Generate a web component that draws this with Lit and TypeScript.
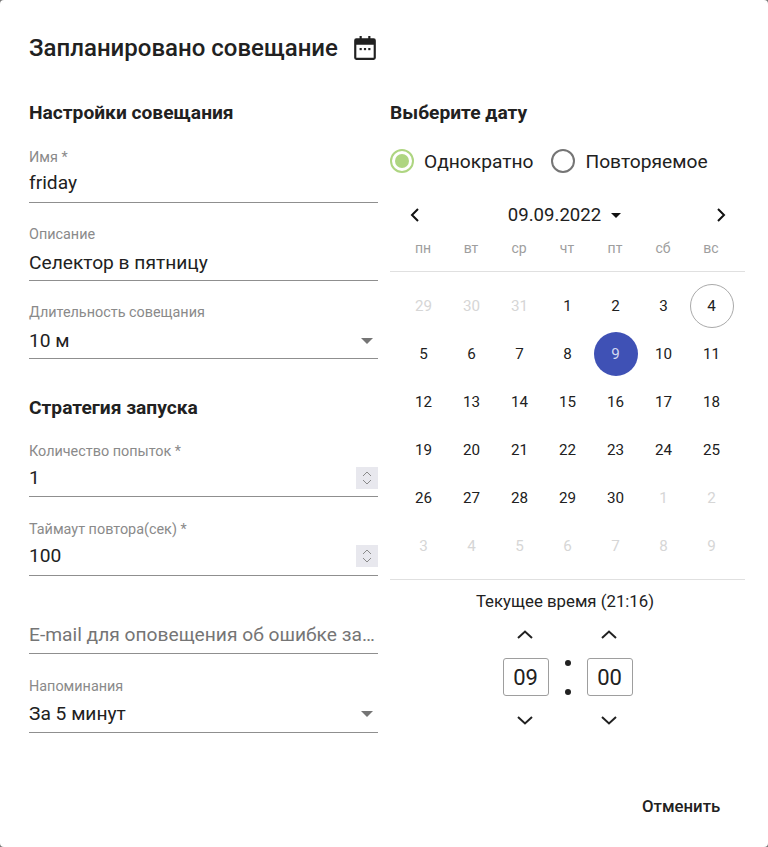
import { LitElement, html, css, svg } from "lit";
import { customElement } from "lit/decorators.js";

const chevUp = svg`<path d="M1 10 L8 3.5 L15 10" fill="none" stroke="#212121" stroke-width="2"/>`;
const chevDown = svg`<path d="M1 3 L8 9.5 L15 3" fill="none" stroke="#212121" stroke-width="2"/>`;

interface Day { n: number; cls?: string }

@customElement("app-root")
export class AppRoot extends LitElement {
  static styles = css`
    :host { display: block; width: 768px; height: 847px; background: #777; font-family: Roboto, "Noto Sans", sans-serif; color: #212121; overflow: hidden; position: relative; }
    .dialog { padding: 33px 23px 0 29px; box-sizing: border-box; height: 847px; display: flex; flex-direction: column; background: #fff; border-radius: 4px; }
    .title { display: flex; align-items: center; gap: 14px; height: 30px; font-size: 24px; font-weight: 500; line-height: 30px; }
    .title svg { display: block; }
    .cols { display: flex; gap: 12px; margin-top: 38px; }
    .left { width: 349px; flex: none; }
    .right { width: 355px; flex: none; }
    h3 { margin: 0; font-size: 19.2px; font-weight: 700; line-height: 24px; height: 24px; }
    .field { position: relative; border-bottom: 1px solid #8f8f8f; box-sizing: content-box; }
    .label { font-size: 14.4px; line-height: 16px; color: #8a8a8a; height: 16px; }
    .value { font-size: 19.2px; line-height: 24px; height: 24px; color: #212121; display: flex; justify-content: space-between; align-items: center; }
    .f1 { margin-top: 24px; padding-bottom: 7px; }
    .f1 .value { margin-top: 6px; }
    .first { margin-top: 25px; }
    .first .value { margin-top: 5px; }
    .low { padding-bottom: 5px; }
    .low .value { margin-top: 8px; }
    .low1 { padding-bottom: 6px; margin-top: 25px; }
    .low1 .value { margin-top: 7px; }
    .short { padding-bottom: 6px; }
    .wide { margin-top: 25px; }
    .section { margin-top: 37px; }
    .arrow { width: 0; height: 0; border-left: 6px solid transparent; border-right: 6px solid transparent; border-top: 6px solid #757575; margin-right: 5px; }
    .spin { width: 22px; height: 22px; background: #e8e8ee; display: flex; flex-direction: column; align-items: center; justify-content: center; gap: 2px; }
    .spin svg { display: block; }
    .placeholder { font-size: 19.2px; line-height: 24px; color: #757575; white-space: nowrap; overflow: hidden; text-overflow: ellipsis; padding-bottom: 6px; }
    .email { margin-top: 47px; }
    .radios { display: flex; align-items: center; margin-top: 24px; height: 24px; font-size: 19.2px; }
    .radio { width: 24px; height: 24px; box-sizing: border-box; border-radius: 50%; border: 2px solid #757575; display: flex; align-items: center; justify-content: center; flex: none; }
    .radio.on { border-color: #aed581; }
    .radio.on::after { content: ""; width: 14px; height: 14px; background: #aed581; border-radius: 50%; }
    .rt { margin-left: 10px; }
    .rl { margin-right: 18px; }
    .cal-head { display: flex; align-items: center; justify-content: space-between; margin-top: 30px; height: 24px; padding: 0 18px 0 19px; }
    .cal-head svg { display: block; }
    .cal-title { font-size: 18.6px; color: #212121; display: flex; align-items: center; gap: 10px; line-height: 24px; padding-right: 7px; }
    .caret { width: 0; height: 0; border-left: 5px solid transparent; border-right: 5px solid transparent; border-top: 5px solid #111; }
    .dow { margin-top: 11px; height: 23px; padding-bottom: 10px; border-bottom: 1px solid #e0e0e0; padding-left: 9px; display: grid; grid-template-columns: repeat(7, 48px); font-size: 14px; color: #9e9e9e; line-height: 20px; text-align: center; }
    .weeks { padding: 10px 0 9px 10px; border-bottom: 1px solid #e0e0e0; display: grid; grid-template-columns: repeat(7, 48px); grid-auto-rows: 48px; }
    .d { width: 44px; height: 44px; margin: 2px; box-sizing: border-box; border-radius: 50%; display: flex; align-items: center; justify-content: center; font-size: 15.2px; color: #212121; padding-right: 1px; }
    .d.off { color: #d6d6d6; }
    .d.today { border: 1px solid #aaa; }
    .d.sel { background: #3f51b5; color: #d3d8f2; }
    .now { text-align: center; font-size: 16.8px; line-height: 20px; margin-top: 11px; color: #212121; padding-right: 5px; }
    .time { display: flex; justify-content: center; gap: 16px; margin-top: 17px; }
    .tcol { display: flex; flex-direction: column; align-items: center; width: 46px; }
    .tcol svg { display: block; }
    .tbox { width: 46px; height: 38px; box-sizing: border-box; border: 1px solid #9e9e9e; border-radius: 3px; font-size: 22px; display: flex; align-items: center; justify-content: center; color: #212121; margin: 17px 0 18px; }
    .sep { width: 6px; display: flex; flex-direction: column; justify-content: space-between; height: 35px; margin-top: 32px; }
    .sep i { display: block; width: 6px; height: 6px; background: #212121; border-radius: 50%; }
    .footer { position: absolute; left: 642px; top: 796px; font-size: 16.8px; font-weight: 500; line-height: 20px; color: #212121; }
  `;

  private field(label: string, value: string, cls = "") {
    return html`<div class="field f1 ${cls}"><div class="label">${label}</div><div class="value">${value}</div></div>`;
  }
  private select(label: string, value: string, cls = "") {
    return html`<div class="field f1 ${cls}"><div class="label">${label}</div><div class="value">${value}<span class="arrow"></span></div></div>`;
  }
  private num(label: string, value: string, cls = "") {
    return html`<div class="field f1 ${cls}"><div class="label">${label}</div><div class="value">${value}
      <span class="spin">
        <svg width="10" height="7" viewBox="0 0 10 7"><path d="M1 6 L5 2 L9 6" fill="none" stroke="#8a8a8a" stroke-width="1"/></svg>
        <svg width="10" height="7" viewBox="0 0 10 7"><path d="M1 1 L5 5 L9 1" fill="none" stroke="#8a8a8a" stroke-width="1"/></svg>
      </span></div></div>`;
  }

  render() {
    const days: Day[] = [
      ...[29, 30, 31].map((n) => ({ n, cls: "off" })),
      ...Array.from({ length: 30 }, (_, i) => ({ n: i + 1, cls: i + 1 === 4 ? "today" : i + 1 === 9 ? "sel" : "" })),
      ...[1, 2, 3, 4, 5, 6, 7, 8, 9].map((n) => ({ n, cls: "off" })),
    ];
    return html`<div class="dialog">
      <div class="title">Запланировано совещание
        <svg width="26" height="26" viewBox="0 0 24 24"><path fill="#212121" d="M7 1h2v2h6V1h2v2h3a2 2 0 0 1 2 2v16a2 2 0 0 1-2 2H4a2 2 0 0 1-2-2V5a2 2 0 0 1 2-2h3V1zM4 9v12h16V9H4z"/><rect x="7" y="12" width="2" height="2" fill="#212121"/><rect x="11" y="12" width="2" height="2" fill="#212121"/><rect x="15" y="12" width="2" height="2" fill="#212121"/></svg>
      </div>
      <div class="cols">
        <div class="left">
          <h3>Настройки совещания</h3>
          ${this.field("Имя *", "friday", "first")}
          ${this.field("Описание", "Селектор в пятницу", "low")}
          ${this.select("Длительность совещания", "10 м", "low")}
          <h3 class="section">Стратегия запуска</h3>
          ${this.num("Количество попыток *", "1", "short")}
          ${this.num("Таймаут повтора(сек) *", "100", "wide")}
          <div class="field email"><div class="placeholder">E-mail для оповещения об ошибке запуска</div></div>
          ${this.select("Напоминания", "За 5 минут", "low1")}
        </div>
        <div class="right">
          <h3>Выберите дату</h3>
          <div class="radios">
            <span class="radio on"></span><span class="rt rl">Однократно</span>
            <span class="radio"></span><span class="rt">Повторяемое</span>
          </div>
          <div class="cal-head">
            <svg width="12" height="16" viewBox="0 0 12 16"><path d="M9 2 L3 8 L9 14" fill="none" stroke="#111" stroke-width="2"/></svg>
            <div class="cal-title">09.09.2022<span class="caret"></span></div>
            <svg width="12" height="16" viewBox="0 0 12 16"><path d="M3 2 L9 8 L3 14" fill="none" stroke="#111" stroke-width="2"/></svg>
          </div>
          <div class="dow">${["пн", "вт", "ср", "чт", "пт", "сб", "вс"].map((d) => html`<span>${d}</span>`)}</div>
          <div class="weeks">${days.map((d) => html`<div class="d ${d.cls}">${d.n}</div>`)}</div>
          <div class="now">Текущее время (21:16)</div>
          <div class="time">
            <div class="tcol">
              <svg width="18" height="13" viewBox="0 0 18 13">${chevUp}</svg>
              <div class="tbox">09</div>
              <svg width="18" height="13" viewBox="0 0 18 13">${chevDown}</svg>
            </div>
            <div class="sep"><i></i><i></i></div>
            <div class="tcol">
              <svg width="18" height="13" viewBox="0 0 18 13">${chevUp}</svg>
              <div class="tbox">00</div>
              <svg width="18" height="13" viewBox="0 0 18 13">${chevDown}</svg>
            </div>
          </div>
        </div>
      </div>
      <div class="footer">Отменить</div>
    </div>`;
  }
}
